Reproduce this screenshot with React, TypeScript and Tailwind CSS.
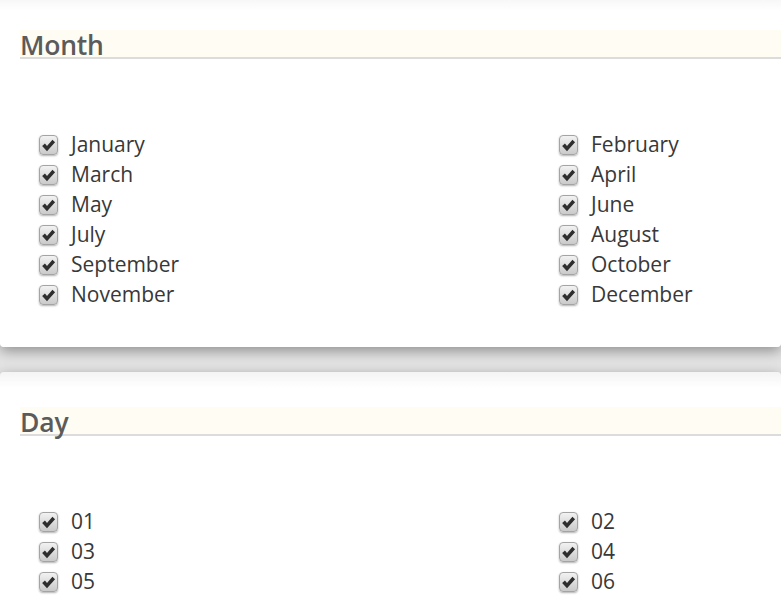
const months = [
  "January",
  "February",
  "March",
  "April",
  "May",
  "June",
  "July",
  "August",
  "September",
  "October",
  "November",
  "December",
];

const days = Array.from({ length: 31 }, (_, i) => String(i + 1).padStart(2, "0"));

const CheckBox = () => (
  <span className="relative flex h-[20px] w-[19px] shrink-0 items-center justify-center rounded-[4px] border border-[#a4a4a4] bg-gradient-to-b from-[#f2f2f2] to-[#cacaca] shadow-[0_1px_2px_rgba(0,0,0,0.3)]">
    <svg viewBox="0 0 16 16" className="h-[15px] w-[15px]">
      <path d="M1.2 8.6 L4.2 5.8 L6.4 8.4 L12.2 1.8 L15 4.6 L6.4 14 Z" fill="#2e2e2e" />
    </svg>
  </span>
);

const Section = ({ title, items }: { title: string; items: string[] }) => (
  <div className="rounded-[4px] bg-gradient-to-b from-[#f4f4f4] to-white to-[16px] pt-[35px] pb-[37px] pl-[20px] shadow-[0_4px_14px_rgba(0,0,0,0.38)]">
    <h2 className="h-[29px] border-b-2 border-[#dcdcdc] bg-[#fffdf3] text-[26.5px] leading-[30px] font-semibold tracking-[-0.2px] text-[#5b5b5b]">
      <span className="relative top-[0px]">{title}</span>
    </h2>
    <div className="mt-[71px] grid grid-cols-[520px_1fr] pl-[19px]">
      {items.map((m) => (
        <label key={m} className="flex h-[30px] items-center gap-[13px] text-[21px] text-[#383838]">
          <CheckBox />
          <span className="relative top-[0px]">{m}</span>
        </label>
      ))}
    </div>
  </div>
);

export default function App() {
  return (
    <div
      className="h-[601px] overflow-hidden bg-[#e4e4e4]"
      style={{ fontFamily: '"Open Sans", "Noto Sans", sans-serif' }}
    >
      <div className="-mt-[5px] flex flex-col gap-[25px]">
        <Section title="Month" items={months} />
        <Section title="Day" items={days} />
      </div>
    </div>
  );
}
